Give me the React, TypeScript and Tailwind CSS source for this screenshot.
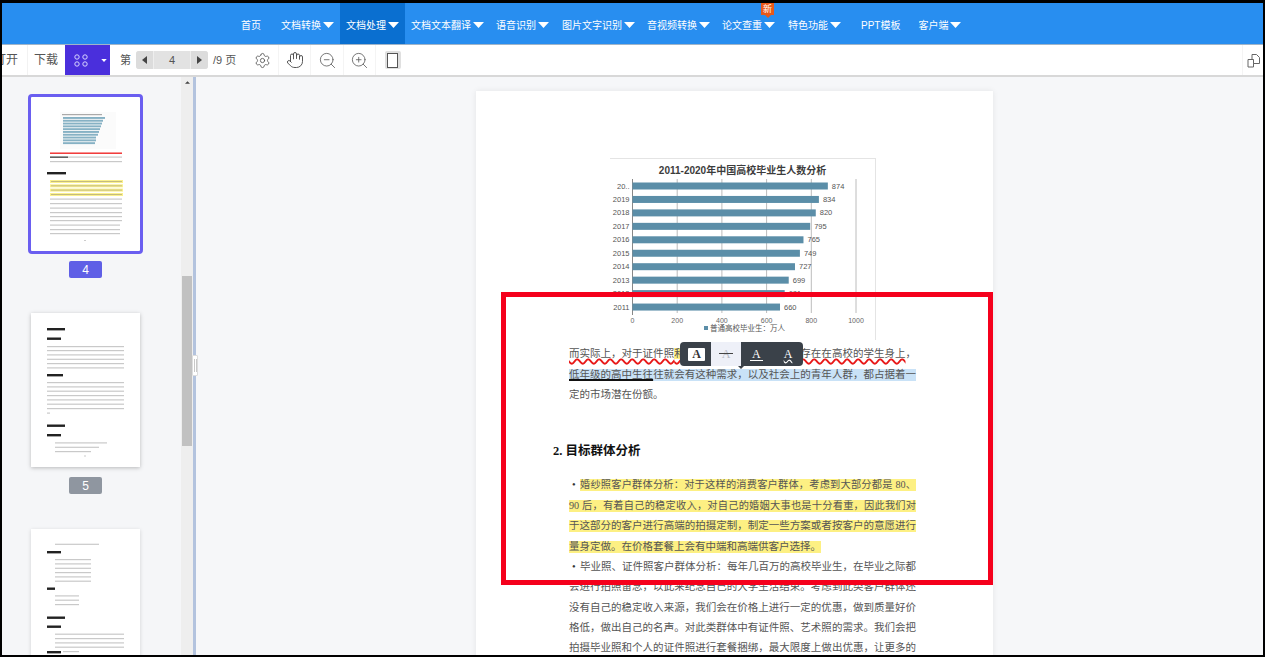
import { Settings, Hand, ZoomIn, ZoomOut } from 'lucide-react';

function Caret({ className }: { className?: string }) {
  return (
    <svg viewBox="0 0 11 6" className={className}>
      <path d="M0 0h11L5.5 6z" fill="currentColor" />
    </svg>
  );
}

const navItems = [
  { label: '首页', cls: 'px-[6px] mr-[8px]' },
  { label: '文档转换', arrow: true, cls: 'px-[6px]' },
  { label: '文档处理', arrow: true, active: true, cls: 'px-[6px]' },
  { label: '文档文本翻译', arrow: true, cls: 'px-[6px]' },
  { label: '语音识别', arrow: true, cls: 'px-[6px] mr-[1px]' },
  { label: '图片文字识别', arrow: true, cls: 'px-[6px]' },
  { label: '音视频转换', arrow: true, cls: 'px-[6px]' },
  { label: '论文查重', arrow: true, badge: true, cls: 'px-[6px] mr-[1px]' },
  { label: '特色功能', arrow: true, cls: 'px-[6px] mr-[1px]' },
  { label: 'PPT模板', cls: 'pl-[13px] pr-[12px]' },
  { label: '客户端', arrow: true, cls: 'px-[6px]' },
];

function TopNav() {
  return (
    <nav className="flex h-[42px] shrink-0 items-stretch border-b border-[#9fb4c9] bg-[#288ef0] pl-[233px] text-[10px] text-white">
      {navItems.map((item) => (
        <div
          key={item.label}
          className={`relative flex items-center whitespace-nowrap pt-[3px] ${item.cls} ${item.active ? 'bg-[#0a6fd0]' : ''}`}
        >
          <span>{item.label}</span>
          {item.arrow && <Caret className="ml-[2px] h-[6px] w-[11px]" />}
          {item.badge && (
            <span className="absolute left-[45px] top-0 flex h-[12px] w-[13px] items-center justify-center bg-[#e8591a] text-[9px] leading-none">
              新
              <span className="absolute left-[4px] top-[12px] border-x-[3px] border-t-[3px] border-x-transparent border-t-[#e8591a]" />
            </span>
          )}
        </div>
      ))}
    </nav>
  );
}

function ToolCell({ children }: { children: React.ReactNode }) {
  return <div className="flex h-full w-[32.5px] items-center justify-center border-r border-[#f4f4f4] text-[#555]">{children}</div>;
}

function Toolbar() {
  return (
    <div className="flex h-[32px] shrink-0 items-center overflow-hidden border-b-2 border-[#d8d8d8] bg-white text-[12px] text-[#555]">
      <div className="-ml-[8px] flex h-full items-center whitespace-nowrap border-r border-[#f2f2f2] pr-[9px]">打开</div>
      <div className="flex h-full items-center whitespace-nowrap pl-[6px] pr-[7px]">下载</div>
      <div className="flex h-full w-[45px] items-center bg-[#4a2fdc] pl-[9px] text-white">
        <svg viewBox="0 0 14 13" className="h-[13px] w-[14px]" fill="none" stroke="#d8d4ff" strokeWidth="1">
          <circle cx="3" cy="3" r="2.2" />
          <circle cx="11" cy="3" r="2.2" />
          <circle cx="3" cy="10" r="2.2" />
          <circle cx="11" cy="10" r="2.2" />
        </svg>
        <Caret className="ml-[13px] h-[3px] w-[6px]" />
      </div>
      <span className="ml-[10px] text-[11px]">第</span>
      <div className="ml-[5px] flex h-[18px] w-[72px] items-center overflow-hidden rounded-[3px] bg-[#e2e2e2] text-[11px]">
        <div className="flex h-full w-[18px] items-center justify-center border-r border-[#eeeeee] bg-[#dcdcdc]">
          <svg viewBox="0 0 5 8" className="h-[8px] w-[5px]"><path d="M5 0v8L0 4z" fill="#444" /></svg>
        </div>
        <div className="flex-1 text-center">4</div>
        <div className="flex h-full w-[18px] items-center justify-center border-l border-[#eeeeee] bg-[#dcdcdc]">
          <svg viewBox="0 0 5 8" className="h-[8px] w-[5px]"><path d="M0 0v8l5-4z" fill="#444" /></svg>
        </div>
      </div>
      <span className="ml-[5px] whitespace-nowrap text-[11px]">/9 页</span>
      <div className="ml-[10px] flex h-full items-center">
        <ToolCell><Settings size={17} strokeWidth={1.2} /></ToolCell>
        <ToolCell><Hand size={18} strokeWidth={1.2} className="text-[#444]" /></ToolCell>
        <ToolCell><ZoomOut size={19} strokeWidth={1} /></ToolCell>
        <ToolCell><ZoomIn size={19} strokeWidth={1} /></ToolCell>
        <div className="flex w-[32.5px] items-center justify-center">
          <div className="flex h-[18px] w-[16px] items-center justify-center rounded-[2px] bg-[#e0e0e0]">
            <div className="h-[15px] w-[11px] border border-[#555] bg-white" />
          </div>
        </div>
      </div>
      <div className="ml-auto flex h-full w-[21px] items-center border-l border-[#f4f4f4] pl-[4px]">
        <svg viewBox="0 0 14 15" className="h-[15px] w-[14px]" fill="white" stroke="#666" strokeWidth="1">
          <path d="M1 6.5h5.5v7.5H1z" />
          <path d="M5 1.5h4.5l3 3v6H6.5V6.5H5z" />
        </svg>
      </div>
    </div>
  );
}

const grayC = '#c9c9c9';

function Rows({ ys, x, w, color = grayC, h = 1.2 }: { ys: number[]; x: number; w: number; color?: string; h?: number }) {
  return (
    <>
      {ys.map((y) => (
        <rect key={y} x={x} y={y} width={w} height={h} fill={color} />
      ))}
    </>
  );
}

// miniature page pictures in the left rail
function ThumbOne() {
  const bars = [42, 40, 39, 38, 37, 36, 35, 33, 33, 32];
  return (
    <svg viewBox="0 0 109 154" className="block h-full w-full blur-[0.4px]">
      <rect x="29" y="15" width="56" height="37" fill="#fbfbfb" />
      <rect x="31" y="17" width="40" height="1.2" fill="#aaa" />
      {bars.map((w, i) => (
        <rect key={i} x="32" y={20 + i * 2.8} width={w} height="1.9" fill="#86b1c4" />
      ))}
      <rect x="19" y="55.5" width="72" height="1.4" fill="#f02a2a" />
      <Rows ys={[59.5, 64]} x={19} w={72} />
      <rect x="19" y="59.5" width="18" height="1.4" fill="#555" />
      <rect x="16" y="75" width="19" height="2.4" fill="#222" />
      <Rows ys={[83, 87.3, 91.6, 96]} x={19} w={73} color="#faf08c" h={3} />
      <Rows ys={[84, 88.3, 92.6, 97]} x={20} w={71} color="#c4bb80" h={1} />
      <Rows ys={[101.5, 106, 110.5, 115, 119, 123]} x={19} w={72} />
      <Rows ys={[127.5, 132, 136]} x={19} w={70} />
      <rect x="53" y="143" width="2" height="1" fill="#ccc" />
    </svg>
  );
}

function ThumbTwo() {
  return (
    <svg viewBox="0 0 109 154" className="block h-full w-full blur-[0.4px]">
      <rect x="16" y="15" width="18" height="2.4" fill="#222" />
      <rect x="16" y="24.500" width="14" height="2.4" fill="#222" />
      <Rows ys={[33, 37, 41.3, 45.7, 50, 54.3]} x={16} w={77} />
      <rect x="16" y="61" width="16" height="2.4" fill="#222" />
      <Rows ys={[69, 73.3, 77.6, 82, 86.3, 90.6, 95]} x={16} w={77} />
      <rect x="16" y="99.500" width="3" height="1.2" fill={grayC} />
      <rect x="16" y="111.500" width="18" height="2.4" fill="#222" />
      <rect x="16" y="121" width="14" height="2.4" fill="#222" />
      <rect x="24" y="129.3" width="52" height="1.2" fill={grayC} />
      <rect x="24" y="133.7" width="44" height="1.2" fill={grayC} />
      <rect x="24" y="138" width="36" height="1.2" fill={grayC} />
      <rect x="53" y="142.500" width="2" height="1" fill="#ccc" />
    </svg>
  );
}

function ThumbThree() {
  return (
    <svg viewBox="0 0 109 154" className="block h-full w-full blur-[0.4px]">
      <rect x="24" y="14.700" width="44" height="1.2" fill={grayC} />
      <rect x="16" y="22" width="14" height="2.4" fill="#222" />
      <Rows ys={[30, 34.3, 38.7, 43, 47.3, 51.6]} x={24} w={36} />
      <rect x="16" y="58.500" width="8" height="2.4" fill="#222" />
      <Rows ys={[66.3, 70.6, 75]} x={24} w={24} />
      <rect x="16" y="87.500" width="18" height="2.4" fill="#222" />
      <rect x="16" y="96.500" width="14" height="2.4" fill="#222" />
      <Rows ys={[104.6, 109, 113.3, 117.6]} x={24} w={69} />
      <rect x="16" y="122" width="14" height="2.4" fill="#222" />
      <rect x="32" y="122" width="16" height="1.2" fill={grayC} />
    </svg>
  );
}

function Sidebar() {
  return (
    <aside className="relative flex w-[194px] shrink-0 overflow-visible bg-[#f5f6f8]">
      <div className="flex w-[167px] shrink-0 flex-col items-center overflow-hidden pt-[17px]">
        <div className="h-[160px] w-[115px] shrink-0 rounded-[4px] border-[3px] border-[#6a5ef0] bg-white">
          <ThumbOne />
        </div>
        <div className="mt-[7px] flex h-[17px] w-[33px] shrink-0 items-center justify-center rounded-[2px] bg-[#5f5fe6] text-[12px] text-white">4</div>
        <div className="mt-[35px] h-[154px] w-[109px] shrink-0 bg-white shadow-[0_1px_4px_rgba(0,0,0,0.25)]">
          <ThumbTwo />
        </div>
        <div className="mt-[10px] flex h-[17px] w-[33px] shrink-0 items-center justify-center rounded-[2px] bg-[#8f96a0] text-[12px] text-white">5</div>
        <div className="mt-[35px] h-[154px] w-[109px] shrink-0 bg-white shadow-[0_1px_4px_rgba(0,0,0,0.15)]">
          <ThumbThree />
        </div>
      </div>
      <div className="ml-auto flex w-[12px] shrink-0 flex-col items-center bg-[#eeeeee]">
        <Caret className="mt-[4px] h-[3px] w-[5px] rotate-180 text-[#444]" />
        <div className="mt-[192px] h-[170px] w-[10px] bg-[#c1c1c1]" />
      </div>
      <div className="w-[3px] shrink-0 bg-[#b3c3de]" />
      <div className="absolute right-[-2px] top-[278px] flex h-[21px] w-[6px] items-center justify-center gap-px rounded-[1px] border border-[#dddddd] bg-white">
        <span className="h-[13px] w-px bg-[#c8c8c8]" />
        <span className="h-[13px] w-px bg-[#c8c8c8]" />
      </div>
    </aside>
  );
}

const chartRows = [
  { y: '20..', v: 874 },
  { y: '2019', v: 834 },
  { y: '2018', v: 820 },
  { y: '2017', v: 795 },
  { y: '2016', v: 765 },
  { y: '2015', v: 749 },
  { y: '2014', v: 727 },
  { y: '2013', v: 699 },
  { y: '2012', v: 681 },
  { y: '2011', v: 660 },
];

function Chart() {
  const x0 = 22.5;
  const unit = 0.2235;
  return (
    <svg viewBox="0 0 266 182" className="ml-[134px] block h-[182px] w-[266px] [font-family:'Liberation_Sans','Noto_Sans_CJK_SC',sans-serif]">
      <path d="M0 .5h265M265.500 0v182" stroke="#e4e4e4" fill="none" />
      <text x="132.500" y="16" textAnchor="middle" fontSize="10" fontWeight="700" fill="#3c3c3c">2011-2020年中国高校毕业生人数分析</text>
      {[200, 400, 600, 800, 1000].map((t) => (
        <line key={t} x1={x0 + t * unit} x2={x0 + t * unit} y1="21" y2="155" stroke="#bcbcbc" />
      ))}
      <line x1={x0} x2={x0} y1="21" y2="157" stroke="#888" />
      {chartRows.map((r, i) => {
        const cy = 28 + i * 13.45;
        return (
          <g key={r.y}>
            <text x={x0 - 3} y={cy + 2.500} textAnchor="end" fontSize="7.500" fill="#555">{r.y}</text>
            <rect x={x0} y={cy - 3.500} width={r.v * unit} height="7" fill="#5b8ea8" />
            <text x={x0 + r.v * unit + 4} y={cy + 2.500} fontSize="7.500" fill="#555">{r.v}</text>
          </g>
        );
      })}
      {[0, 200, 400, 600, 800, 1000].map((t) => (
        <text key={t} x={x0 + t * unit} y="165" textAnchor="middle" fontSize="7" fill="#666">{t}</text>
      ))}
      <rect x="94" y="168" width="4" height="4" fill="#5b8ea8" />
      <text x="100" y="173" fontSize="7.500" fill="#555">普通高校毕业生：万人</text>
    </svg>
  );
}

function Line({ children, className }: { children: React.ReactNode; className?: string }) {
  return (
    <div className="flex h-[20.4px] items-center">
      <div className={`h-[12px] w-full whitespace-nowrap leading-[12px] [text-align-last:justify] ${className ?? ''}`}>{children}</div>
    </div>
  );
}

function BulletLine({ children, mark }: { children: React.ReactNode; mark?: boolean }) {
  return (
    <div className="flex h-[20.4px] items-center">
      <span className="w-[11px] shrink-0 pl-[3px] leading-[12px] text-[#333]">•</span>
      <div className={`h-[12px] flex-1 whitespace-nowrap leading-[12px] [text-align-last:justify] ${mark ? 'bg-[#fdf083] text-[10.2px]' : ''}`}>{children}</div>
    </div>
  );
}

function MarkupBar() {
  return (
    <div className="absolute left-[204px] top-[251px] flex h-[24px] w-[123px] items-center overflow-visible rounded-[4px] bg-[#3a4149] text-[12px] font-bold [font-family:'Liberation_Serif',serif]">
      <div className="ml-[8px] flex h-[13px] w-[17px] items-center justify-center rounded-[1px] bg-white text-[#333]">A</div>
      <div className="relative ml-[6px] flex h-full w-[30px] items-center justify-center bg-[#eef0f8] font-normal text-[#b5bac4]">
        A
        <span className="absolute left-[8px] top-[11px] h-px w-[14px] bg-[#444]" />
      </div>
      <div className="ml-[9px] border-b border-white px-[2px] text-[12px] font-normal leading-[12px] text-white">A</div>
      <div className="ml-[21px] text-[12px] font-normal leading-[12px] text-white underline decoration-wavy decoration-white">A</div>
      <span className="absolute left-[58px] top-[24px] border-x-[3px] border-t-[3px] border-x-transparent border-t-[#3a4149]" />
    </div>
  );
}

function DocPage() {
  return (
    <div className="relative ml-[280px] h-[700px] w-[517px] shrink-0 bg-white pt-[67px] shadow-[0_0_6px_rgba(0,0,0,0.08)]">
      <Chart />
      <div className="ml-[93px] mr-[77px] mt-[4px] text-[10.5px] text-[#555] [font-family:'Liberation_Serif','Noto_Sans_CJK_SC',serif]">
        <Line>
          <span className="underline decoration-[#e81818] decoration-wavy decoration-[1.5px]">
            而实际上，对于证件照<span className="bg-[#fdf083]">和</span>毕业照的需求，不仅仅只存在在高校的学生身上
          </span>
          ，
        </Line>
        <Line className="bg-[#c9e2f7]">
          <span className="underline decoration-[#111] decoration-[1.5px]">低年级的高中生往</span>往就会有这种需求，以及社会上的青年人群，都占据着一
        </Line>
        <div className="flex h-[20.4px] items-center leading-[12px]">定的市场潜在份额。</div>
        <h2 className="-ml-[16px] mt-[36px] h-[20px] text-[12.5px] font-bold leading-[20px] text-[#111]">2. 目标群体分析</h2>
        <div className="mt-[14px]">
          <BulletLine mark>婚纱照客户群体分析：对于这样的消费客户群体，考虑到大部分都是 80、</BulletLine>
          <Line className="bg-[#fdf083] text-[10.2px]">90 后，有着自己的稳定收入，对自己的婚姻大事也是十分看重，因此我们对</Line>
          <Line className="bg-[#fdf083]">于这部分的客户进行高端的拍摄定制，制定一些方案或者按客户的意愿进行</Line>
          <div className="flex h-[20.4px] items-center">
            <span className="h-[12px] whitespace-nowrap bg-[#fdf083] leading-[12px]">量身定做。在价格套餐上会有中端和高端供客户选择。</span>
          </div>
          <BulletLine>毕业照、证件照客户群体分析：每年几百万的高校毕业生，在毕业之际都</BulletLine>
          <Line>会进行拍照留念，以此来纪念自己的大学生活结束。考虑到此类客户群体还</Line>
          <Line>没有自己的稳定收入来源，我们会在价格上进行一定的优惠，做到质量好价</Line>
          <Line>格低，做出自己的名声。对此类群体中有证件照、艺术照的需求。我们会把</Line>
          <Line>拍摄毕业照和个人的证件照进行套餐捆绑，最大限度上做出优惠，让更多的</Line>
        </div>
      </div>
      <MarkupBar />
    </div>
  );
}

export default function App() {
  return (
    <div className="relative h-[657px] w-[1265px] overflow-hidden border-b-2 border-l-2 border-r-2 border-t-[3px] border-black bg-white [font-family:'Liberation_Sans','Noto_Sans_CJK_SC',sans-serif]">
      <div className="flex h-full flex-col">
        <TopNav />
        <Toolbar />
        <div className="flex min-h-0 flex-1">
          <Sidebar />
          <main className="flex-1 overflow-hidden bg-[#f6f7f9] pt-[14px]">
            <DocPage />
          </main>
        </div>
      </div>
      {/* red annotation frame over the document */}
      <div className="pointer-events-none absolute left-[499px] top-[289px] h-[293px] w-[492px] border-[5px] border-[#f5001c]" />
    </div>
  );
}
